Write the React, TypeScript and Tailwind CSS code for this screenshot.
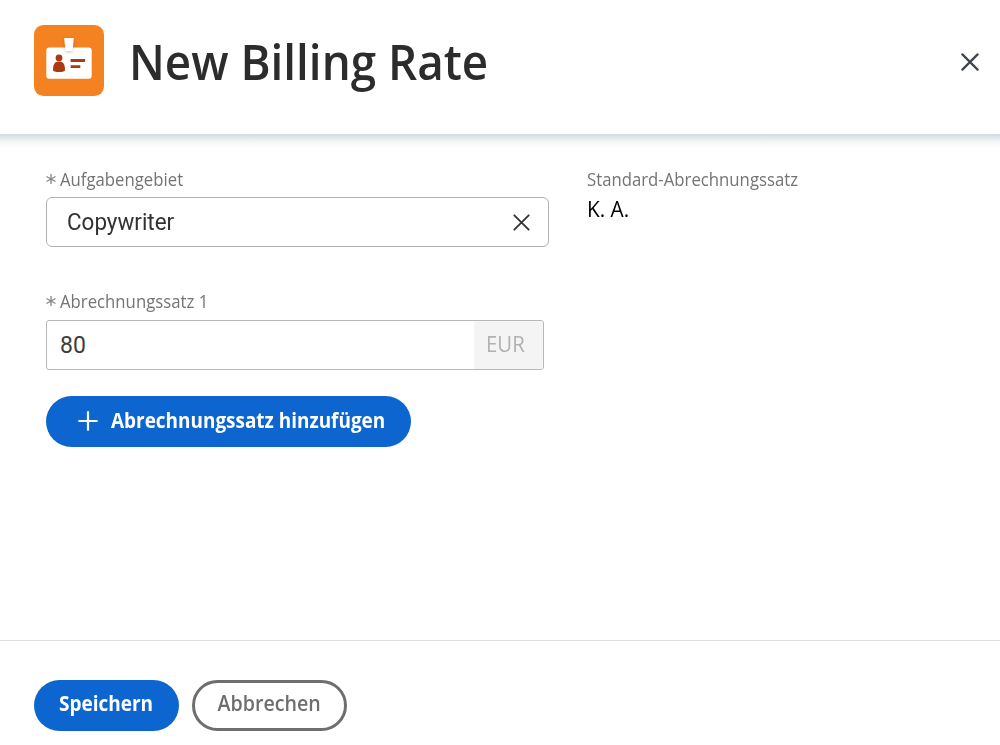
import type { ReactNode } from 'react';

function Cross({ className, width }: { className: string; width: number }) {
  return (
    <svg viewBox="0 0 18 18" className={className} fill="none" stroke="currentColor" strokeWidth={width} strokeLinecap="round">
      <path d="M1.4 1.4 16.6 16.6M16.6 1.4 1.4 16.6" />
    </svg>
  );
}

function BadgeIcon() {
  return (
    <svg viewBox="0 0 70 71" className="h-[71px] w-[70px] shrink-0">
      <defs>
        <filter id="clip-shadow" x="-60%" y="-40%" width="220%" height="200%">
          <feDropShadow dx="0" dy="1" stdDeviation="1.6" floodColor="#000" floodOpacity="0.25" />
        </filter>
      </defs>
      <rect width="70" height="71" rx="9.5" fill="#f58220" />
      <rect x="12.3" y="22.5" width="45.4" height="31.3" rx="3" fill="#fff" />
      <path d="M30.2 13h9.600l-1.200 11.400a1.800 1.800 0 0 1-1.800 1.600h-3.600a1.800 1.800 0 0 1-1.800-1.600z" fill="#fff" filter="url(#clip-shadow)" />
      <circle cx="25" cy="33" r="3.400" fill="#ab3a10" />
      <path d="M19 45.300c0-5.600 1.800-8.500 4.300-8.500h3.400c2.500 0 4.300 2.900 4.300 8.500 0 1-2.700 1.800-6 1.800s-6-.8-6-1.800z" fill="#ab3a10" />
      <path d="M36.600 34h14.500v2.900H36.600zM36.600 40.200h9.700v2.900h-9.700z" fill="#ab3a10" />
    </svg>
  );
}

function Label({ required, children }: { required?: boolean; children: ReactNode }) {
  return (
    <div className="flex h-6 items-center text-[18px] leading-6 whitespace-nowrap text-[#747474]">
      {required && (
        <svg viewBox="0 0 10 10" className="mr-[4px] h-[10px] w-[10px]" stroke="#858585" strokeWidth="1.3">
          <path d="M5 0v10M.5 2.500l9 5M9.500 2.500l-9 5" />
        </svg>
      )}
      <span className="origin-left scale-x-[0.93]">{children}</span>
    </div>
  );
}

export default function App() {
  return (
    <div className="flex h-[745px] w-[1000px] flex-col overflow-hidden bg-white font-['Open_Sans',sans-serif]">
      <header className="flex h-[134px] shrink-0 items-start pt-[25px] pr-[21px] pl-[34px]">
        <BadgeIcon />
        <h1 className="ml-[25px] h-[71px] flex-1 origin-left scale-x-[0.934] pt-px text-[49px] leading-[71px] font-semibold whitespace-nowrap text-[#2c2c2c]">
          New Billing Rate
        </h1>
        <button className="mt-[28px] text-[#3e444e]" aria-label="Close">
          <Cross className="block h-[18px] w-[18px]" width={2.2} />
        </button>
      </header>
      <div className="h-[14px] shrink-0 bg-linear-to-b from-[#d3dae0] via-[#f1f4f5] to-white" />

      <main className="flex flex-1 items-start pt-[19px] pl-[46px]">
        <section className="flex w-[541px] flex-col items-start">
          <Label required>Aufgabengebiet</Label>
          <div className="mt-[6px] flex h-[50px] w-[503px] items-center justify-between rounded-[6px] border border-[#b1b1b1] pr-[18px] pl-[20px] text-[#323232]">
            <span className="origin-left scale-x-[0.975] pt-[2px] font-[Roboto,sans-serif] text-[23px] leading-[28px]">Copywriter</span>
            <Cross className="h-[17px] w-[17px]" width={1.9} />
          </div>

          <div className="mt-[42px]">
            <Label required>Abrechnungssatz 1</Label>
          </div>
          <div className="mt-[7px] flex h-[50px] w-[498px] items-stretch overflow-hidden rounded-[3px] border border-[#b8b8b8]">
            <span className="flex-1 pl-[13px] font-[Roboto,sans-serif] text-[23px] leading-[49px] text-[#3c3c3c]">80</span>
            <span className="w-[69px] bg-[#f4f4f4] pl-[12px] text-[21px] leading-[46px] text-[#b1b1b1]">
              <span className="inline-block origin-left scale-x-[0.97]">EUR</span>
            </span>
          </div>

          <button className="mt-[26px] flex h-[51px] w-[365px] items-center rounded-full bg-[#0d66d0] pb-[2px] pl-[32px] text-[21px] font-bold whitespace-nowrap text-white">
            <svg viewBox="0 0 20 20" className="mr-[13px] h-[20px] w-[20px] shrink-0" stroke="currentColor" strokeWidth="2.2" strokeLinecap="round">
              <path d="M10 1.200v17.600M1.200 10h17.600" />
            </svg>
            <span className="origin-left scale-x-[0.902]">Abrechnungssatz hinzufügen</span>
          </button>
        </section>

        <section>
          <Label>Standard-Abrechnungssatz</Label>
          <p className="mt-[2px] origin-left scale-x-[0.945] text-[22px] leading-[30px] text-black">K. A.</p>
        </section>
      </main>

      <footer className="flex h-[105px] shrink-0 items-start gap-[13px] border-t border-[#dedede] pt-[39px] pl-[34px] text-[21px]">
        <button className="h-[51px] w-[145px] rounded-full bg-[#0d66d0] pb-[3px] font-bold text-white">
          <span className="inline-block scale-x-[0.905]">Speichern</span>
        </button>
        <button className="h-[51px] w-[155px] rounded-full border-[3px] border-[#6e6e6e] pb-[3px] font-semibold text-[#6e6e6e]">
          <span className="inline-block scale-x-[0.935]">Abbrechen</span>
        </button>
      </footer>
    </div>
  );
}
